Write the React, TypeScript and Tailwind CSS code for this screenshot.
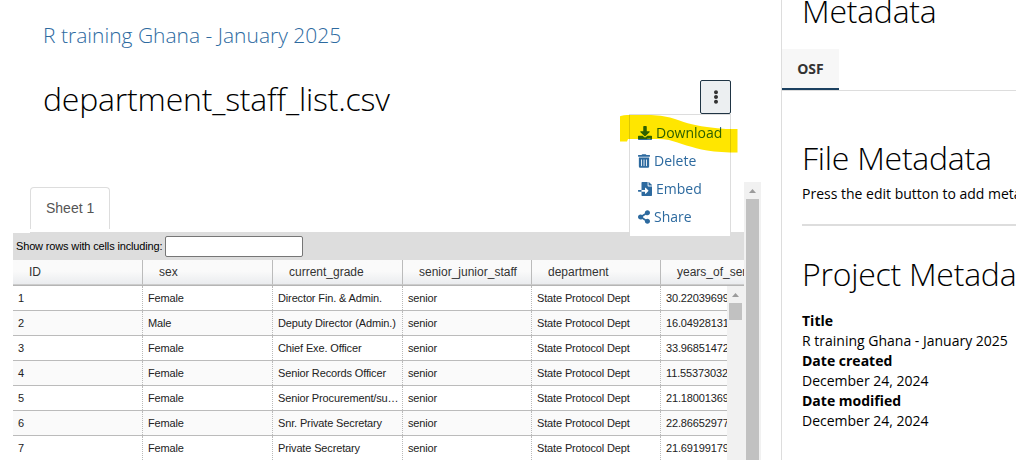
import type { ReactNode } from "react";
import { FaDownload, FaTrashAlt, FaFileImport, FaShareAlt, FaEllipsisV } from "react-icons/fa";

const columns = ["ID", "sex", "current_grade", "senior_junior_staff", "department", "years_of_service"];

const rows = [
  ["1", "Female", "Director Fin. & Admin.", "senior", "State Protocol Dept", "30.22039699"],
  ["2", "Male", "Deputy Director (Admin.)", "senior", "State Protocol Dept", "16.04928131"],
  ["3", "Female", "Chief Exe. Officer", "senior", "State Protocol Dept", "33.96851472"],
  ["4", "Female", "Senior Records Officer", "senior", "State Protocol Dept", "11.55373032"],
  ["5", "Female", "Senior Procurement/su…", "senior", "State Protocol Dept", "21.18001369"],
  ["6", "Female", "Snr. Private Secretary", "senior", "State Protocol Dept", "22.86652977"],
  ["7", "Female", "Private Secretary", "senior", "State Protocol Dept", "21.69199179"],
];

const gridCols = "grid grid-cols-[130px_130px_130px_129px_129px_130px]";

function MenuItem({ icon, children }: { icon: ReactNode; children: string }) {
  return (
    <li className="flex h-7 items-center gap-1 pl-2 text-sm text-[#2d6a9f]">
      {icon}
      <span>{children}</span>
    </li>
  );
}

function ActionsMenu() {
  return (
    <div className="absolute top-[34px] right-0 z-10 w-[102px]">
      <ul className="h-[123px] border border-[#ddd] bg-white pt-1">
        <MenuItem icon={<FaDownload size={14} />}>Download</MenuItem>
        <MenuItem icon={<FaTrashAlt size={14} className="w-3" />}>Delete</MenuItem>
        <MenuItem icon={<FaFileImport size={14} />}>Embed</MenuItem>
        <MenuItem icon={<FaShareAlt size={14} className="w-3" />}>Share</MenuItem>
      </ul>
      <svg
        className="absolute top-0 -left-[10px] mix-blend-multiply"
        width="120"
        height="40"
        viewBox="0 0 120 40"
      >
        <path
          d="M1 2.5Q1 1.5 8 1L32 1Q42 1 51 3.5C65 8 72 11 88 13Q99 14.5 107 15L118.500 15V38.500C108 38.500 97 38 88 36.500C73 34 61 29 50 26Q44 25 39 25H9L8 27.500H1Z"
          fill="#ffe600"
        />
      </svg>
    </div>
  );
}

function ScrollArrow() {
  return (
    <svg className="shrink-0" width="17" height="17" viewBox="0 0 17 17">
      <path d="M5 11L8.500 7L12 11Z" fill="#9b9b9b" />
    </svg>
  );
}

function SheetTable() {
  return (
    <div className="flex h-[228px] w-[731px] flex-col overflow-hidden font-['Liberation_Sans',sans-serif]">
      <div className="flex h-[27px] shrink-0 items-center bg-[#ddd] pl-[3px] text-[11px] text-black">
        <label htmlFor="filter" className="w-[146px] tracking-[-0.15px] whitespace-nowrap">
          Show rows with cells including:
        </label>
        <input id="filter" className="ml-[3px] h-[21px] w-[138px] rounded-[2px] border border-[#767676] bg-white" />
      </div>
      <div className={`${gridCols} h-[26px] shrink-0 border-b border-[#b5b5b5] bg-linear-to-b from-[#fafafa] from-45% to-[#e9ebee]`}>
        {columns.map((name) => (
          <div key={name} className="border-r border-b border-r-[#bbb] border-b-[#ccc] pl-4 text-xs leading-6 text-[#333]">
            {name}
          </div>
        ))}
      </div>
      <div className="flex flex-1 overflow-hidden">
        <div className="w-[714px] shrink-0 overflow-hidden">
          {rows.map((row) => (
            <div key={row[0]} className={`${gridCols} h-[25px] border-b border-[#bbb] odd:bg-white even:bg-[#fafafa]`}>
              {row.map((cell, i) => (
                <div
                  key={i}
                  className="truncate border-r border-dotted border-[#bbb] pl-[5px] text-[11px] leading-6 tracking-[-0.14px] text-[#222]"
                >
                  {cell}
                </div>
              ))}
            </div>
          ))}
        </div>
        <div className="flex w-[17px] shrink-0 flex-col items-center bg-[#f1f1f1]">
          <ScrollArrow />
          <div className="h-[17px] w-[13px] bg-[#c1c1c1]" />
        </div>
      </div>
    </div>
  );
}

export default function App() {
  return (
    <div className="flex h-[460px] w-[1016px] overflow-hidden bg-white font-['Open_Sans',sans-serif]">
      <main className="flex w-[781px] shrink-0 flex-col">
        <header className="flex h-[182px] shrink-0 flex-col pl-[43px]">
          <a className="mt-[19px] h-8 text-[21px] leading-8 font-light text-[#2d6a9f]">R training Ghana - January 2025</a>
          <div className="mt-[29px] flex justify-between pr-[50px]">
            <h1 className="h-10 text-[32px] leading-[38px] font-light tracking-[-0.2px] text-black">department_staff_list.csv</h1>
            <div className="relative">
              <button className="flex h-[34px] w-[31px] items-center justify-center rounded-[2px] border border-[#1f3444] bg-[#eceff1] text-[#333]">
                <FaEllipsisV size={14} />
              </button>
              <ActionsMenu />
            </div>
          </div>
        </header>
        <div className="flex flex-1">
          <section className="ml-[13px] flex w-[731px] flex-col">
            <div className="flex h-[50px] pt-[5px] pl-[17px]">
              <div className="h-[42px] w-20 rounded-t border border-b-0 border-[#ddd] pl-[15px] font-['Liberation_Sans',sans-serif] text-sm leading-10 text-[#555]">
                Sheet 1
              </div>
            </div>
            <div className="ml-[17px] h-px bg-[#ddd]" />
            <SheetTable />
          </section>
          <div className="flex w-[17px] flex-col items-center bg-[#f1f1f1]">
            <ScrollArrow />
            <div className="w-[13px] flex-1 bg-[#c1c1c1]" />
          </div>
        </div>
      </main>
      <aside className="w-[235px] shrink-0 overflow-hidden border-l border-[#ddd] whitespace-nowrap text-black">
        <h2 className="-mt-2 h-[57px] pl-[20px] text-[32px] leading-[38px] font-light tracking-[-0.25px]">Metadata</h2>
        <div className="h-[42px] border-b border-[#ddd]">
          <div className="h-[41px] w-[57px] border-b-2 border-[#1b4060] bg-[#f7f7f7] text-center text-sm leading-10 font-bold text-[#333]">
            OSF
          </div>
        </div>
        <div className="pl-5">
          <section className="h-[135px] border-b-2 border-[#ddd] pt-[47px]">
            <h2 className="text-[32px] leading-10 font-light tracking-[-0.25px]">File Metadata</h2>
            <p className="mt-1.5 text-sm leading-5">Press the edit button to add metadata</p>
          </section>
          <section className="pt-7">
            <h2 className="text-[32px] leading-10 font-light tracking-[-0.25px]">Project Metadata</h2>
            <dl className="mt-[17px] text-sm leading-5">
              <dt className="font-bold">Title</dt>
              <dd>R training Ghana - January 2025</dd>
              <dt className="font-bold">Date created</dt>
              <dd>December 24, 2024</dd>
              <dt className="font-bold">Date modified</dt>
              <dd>December 24, 2024</dd>
            </dl>
          </section>
        </div>
      </aside>
    </div>
  );
}
